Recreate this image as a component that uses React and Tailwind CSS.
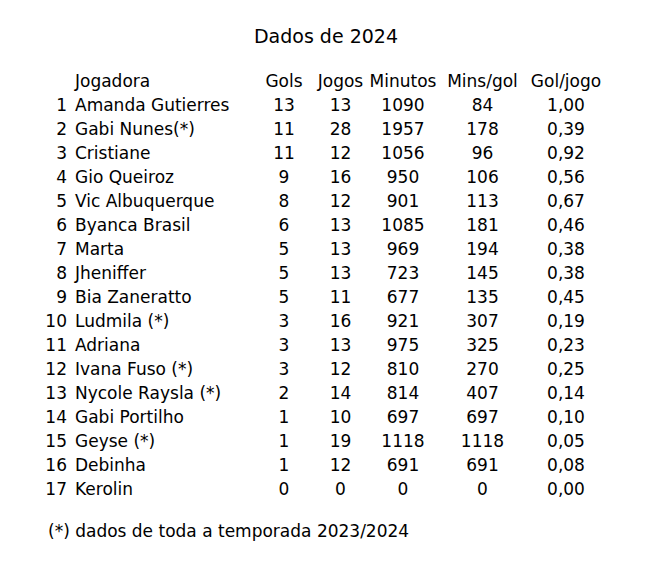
import React from 'react';

const rows = [
  [1, 'Amanda Gutierres', 13, 13, 1090, 84, '1,00'],
  [2, 'Gabi Nunes(*)', 11, 28, 1957, 178, '0,39'],
  [3, 'Cristiane', 11, 12, 1056, 96, '0,92'],
  [4, 'Gio Queiroz', 9, 16, 950, 106, '0,56'],
  [5, 'Vic Albuquerque', 8, 12, 901, 113, '0,67'],
  [6, 'Byanca Brasil', 6, 13, 1085, 181, '0,46'],
  [7, 'Marta', 5, 13, 969, 194, '0,38'],
  [8, 'Jheniffer', 5, 13, 723, 145, '0,38'],
  [9, 'Bia Zaneratto', 5, 11, 677, 135, '0,45'],
  [10, 'Ludmila (*)', 3, 16, 921, 307, '0,19'],
  [11, 'Adriana', 3, 13, 975, 325, '0,23'],
  [12, 'Ivana Fuso (*)', 3, 12, 810, 270, '0,25'],
  [13, 'Nycole Raysla (*)', 2, 14, 814, 407, '0,14'],
  [14, 'Gabi Portilho', 1, 10, 697, 697, '0,10'],
  [15, 'Geyse (*)', 1, 19, 1118, 1118, '0,05'],
  [16, 'Debinha', 1, 12, 691, 691, '0,08'],
  [17, 'Kerolin', 0, 0, 0, 0, '0,00'],
];

const grid = 'grid grid-cols-[31px_184px_58px_55px_70px_89px_78px] leading-[24px]';

export default function App() {
  return (
    <div className="min-h-screen bg-white text-black font-['DejaVu_Sans',Verdana,sans-serif]">
      <div className="ml-[40px] w-[572px] pt-[24px]">
        <h1 className="text-center text-[19px] leading-[24px]">Dados de 2024</h1>

        <div className="mt-[21px] text-[17px]">
          <div className={grid}>
            <div />
            <div className="pl-[4px]">Jogadora</div>
            <div className="text-center">Gols</div>
            <div className="text-center">Jogos</div>
            <div className="text-center whitespace-nowrap">Minutos</div>
            <div className="text-center">Mins/gol</div>
            <div className="text-center">Gol/jogo</div>
          </div>
          {rows.map((r) => (
            <div key={r[0]} className={grid}>
              <div className="pr-[4px] text-right">{r[0]}</div>
              <div className="pl-[4px] whitespace-nowrap">{r[1]}</div>
              <div className="text-center">{r[2]}</div>
              <div className="text-center">{r[3]}</div>
              <div className="text-center">{r[4]}</div>
              <div className="text-center">{r[5]}</div>
              <div className="text-center">{r[6]}</div>
            </div>
          ))}
        </div>

        <p className="mt-[18px] pl-[8px] text-[17px] leading-[24px]">
          (*) dados de toda a temporada 2023/2024
        </p>
      </div>
    </div>
  );
}
